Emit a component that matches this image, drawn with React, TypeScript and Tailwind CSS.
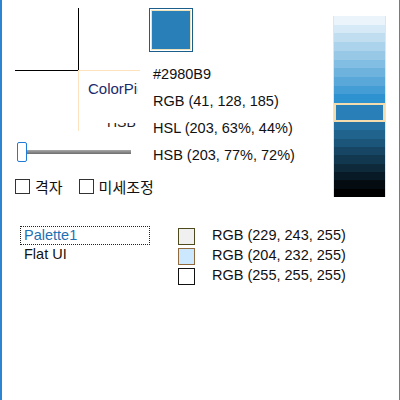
import React from "react"

const hsl = (l: number) => `hsl(203, 63%, ${l}%)`

const lighter = [95, 90, 85, 80, 75, 70, 65, 60, 55, 50]
const darker = [39, 34, 29, 24, 19, 14, 9, 4, 0]

const palette = [
  { label: "RGB (229, 243, 255)", box: "border-[#4e4a1e] bg-[#f0f0f0]" },
  { label: "RGB (204, 232, 255)", box: "border-[#8e6a3e] bg-[#cce8ff]" },
  { label: "RGB (255, 255, 255)", box: "border-[#111] bg-white" },
]

/* ─── Checkbox ─── */

function Check({ label }: { label: string }) {
  return (
    <div className="flex items-center gap-[5px]">
      <span className="w-[15px] h-[15px] border border-[#333] bg-white" />
      <span className="text-[15px] leading-none text-[#111] font-['Noto_Sans_CJK_KR',sans-serif]">{label}</span>
    </div>
  )
}

export default function App() {
  return (
    <div className="w-[400px] h-[400px] bg-white border-l-2 border-l-[#2b86cf] border-r border-r-[#4f86b0] overflow-hidden text-[#111] font-['Liberation_Sans',Arial,sans-serif] text-[14.5px]">
      <div className="flex">
        <div className="w-[331px] flex flex-col">
          <div className="flex">
            {/* picker */}
            <div className="w-[147px] flex flex-col">
              <div className="relative h-[141px]">
                <div className="absolute left-[76px] top-[8px] w-px h-[62px] bg-black" />
                <div className="absolute left-[13px] top-[70px] w-[64px] h-px bg-black" />
                <div className="absolute left-[77px] top-[70px] w-[61px] h-px bg-[#fde3bd]" />
                <div className="absolute left-[76px] top-[70px] w-px h-[61px] bg-[#fde3bd]" />
                <div className="absolute left-[86px] top-[80px] w-[50px] overflow-hidden whitespace-nowrap text-[15px] leading-[18px] text-[#1b2a6b]">
                  ColorPicker
                </div>
                <div className="absolute left-[105px] top-[123px] w-[34px] h-[6px] overflow-hidden">
                  <div className="mt-[-9px] leading-[16px] text-[14px] text-[#222]">HSB</div>
                </div>
              </div>
              <div className="flex items-center h-[21px] pl-[15px]">
                <div className="w-[10px] h-[20px] border border-[#1e7bd8] bg-white rounded-[2px]" />
                <div className="w-[104px] h-[4px] bg-gradient-to-b from-[#a8a8a8] to-[#6e6e6e]" />
              </div>
            </div>

            {/* info */}
            <div className="flex flex-col">
              <div className="mt-[8px] w-[44px] h-[44px] border border-[#1b5e8c] p-px">
                <div className="w-full h-full border border-[#ece2bc] bg-[#2980b9]" />
              </div>
              <div className="mt-[9px] pl-[4px] leading-[27px]">
                <div>#2980B9</div>
                <div>RGB (41, 128, 185)</div>
                <div>HSL (203, 63%, 44%)</div>
                <div>HSB (203, 77%, 72%)</div>
              </div>
            </div>
          </div>

          <div className="flex items-center gap-[16px] h-[15px] mt-[10px] pl-[13px]">
            <Check label="격자" />
            <Check label="미세조정" />
          </div>
        </div>

        {/* shades */}
        <div className="mt-[16px] w-[53px] flex flex-col border-x border-[#e4e4e4]">
          <div className="h-[87px] flex flex-col">
            {lighter.map((l) => (
              <div key={l} className="flex-1" style={{ background: hsl(l) }} />
            ))}
          </div>
          <div className="h-[19px] border-2 border-[#f3dcae] bg-[#2980b9]" />
          <div className="h-[75px] flex flex-col">
            {darker.map((l) => (
              <div key={l} className="flex-1" style={{ background: hsl(l) }} />
            ))}
          </div>
        </div>
      </div>

      <div className="flex mt-[29px]">
        <div className="ml-[18px] w-[130px]">
          <div className="h-[19px] border border-dotted border-[#222] pl-[3px] leading-[17px] text-[#1f6fb2]">Palette1</div>
          <div className="h-[19px] pl-[4px] leading-[19px]">Flat UI</div>
        </div>
        <div className="ml-[28px] flex flex-col">
          {palette.map((p) => (
            <div key={p.label} className="flex items-center h-[20px]">
              <span className={`w-[17px] h-[17px] border ${p.box}`} />
              <span className="ml-[17px]">{p.label}</span>
            </div>
          ))}
        </div>
      </div>
    </div>
  )
}
